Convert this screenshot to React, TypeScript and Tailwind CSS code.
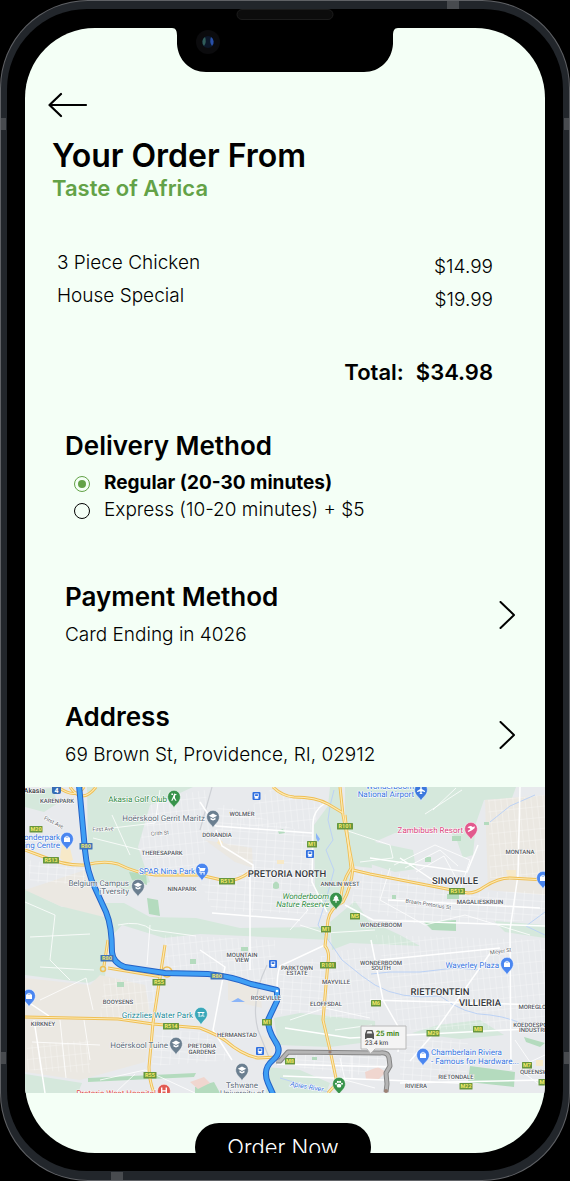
import { useState } from "react";
import type { ReactNode } from "react";

type Point = [number, number];

const items = [
  { name: "3 Piece Chicken", price: "$14.99" },
  { name: "House Special", price: "$19.99" },
];

const deliveryOptions = [
  { id: "regular", label: "Regular (20-30 minutes)" },
  { id: "express", label: "Express (10-20 minutes) + $5" },
];

const yellowRoads = [
  "M25 850 L44 857 Q66 866 85 865 Q104 860 118 864 Q136 873 155 875 L200 875 L226 881 Q238 881 250 872",
  "M58 787 Q76 800 84 787 M70 787 Q82 805 96 787",
  "M273 787 Q282 796 294 797 Q316 797 328 804 L343 813",
  "M340 787 L343 815 L353 868 Q351 888 343 902 Q330 908 328 920 L325 946 Q330 952 328 962 L323 1020 L330 1050 L337 1083 L328 1093",
  "M345 815 L351 868 Q340 885 341 903",
  "M353 870 L370 874 L447 889 L468 893 Q476 893 484 887 Q498 878 510 878 L545 880",
  "M108 940 L104 966 M108 968 L162 977",
  "M25 1017 L118 1019 L153 1024 L200 1028 Q218 1035 226 1041 Q242 1055 258 1058 L277 1057",
  "M165 945 L160 977 L153 1023 L149 1067 Q149 1080 154 1093",
];

const whiteRoads = [
  "M325 803 Q313 811 313 823 L312 882 L327 912",
  "M325 945 L280 966 Q277 974 277 990",
  "M200 802 L216 826 L312 833",
  "M216 830 L222 846 L253 865 L253 875",
  "M434 1033 L491 952 M410 1061 L434 1033",
  "M371 940 L383 1000 L400 1030 L398 1052",
  "M277 1064 L390 1067 M283 1076 L460 1083 M400 1083 L545 1080",
  "M285 1028 L350 1038 L545 1028",
  "M520 787 L518 875 L510 930 L511 1070",
  "M478 845 L467 872 L370 858 M400 858 L440 885",
  "M388 900 L540 908 M345 905 L373 920 L545 926",
  "M25 1000 L49 1016 M34 1020 L45 1093",
  "M200 950 L225 967 L213 1030 L232 1060",
  "M370 1000 L545 1005 M380 960 L500 948",
  "M250 875 L250 970 M212 913 L300 920",
];

const minorRoads = [
  "M25 902 L55 915 L50 960 L70 980 M30 937 L90 934 M40 967 L94 970",
  "M95 830 L155 823 L160 790 M93 838 L153 853 M112 815 L130 855",
  "M118 925 Q140 920 152 930 L196 936 M150 925 L147 965",
  "M433 810 L456 788 M425 814 L462 790",
  "M345 830 L390 845 L393 858 L360 862",
  "M394 865 L435 845 L470 860 L460 890 M405 868 L440 850 L458 866 M416 872 L444 856 L456 878",
  "M390 868 L380 900 L425 925 L465 915 L530 935",
  "M40 1000 L86 978 L93 1010 M32 1042 L100 1045 M60 1020 L66 1078 M84 1020 L90 1060",
  "M100 1080 L145 1070 L195 1093 M115 1093 L135 1074",
  "M290 890 L308 910 L290 930 M300 925 L325 933 L375 930",
  "M290 1020 L325 1008 L370 1018 M335 1030 L372 1025",
  "M340 1058 L345 1080 L375 1088 M352 1056 L352 1078",
  "M515 1040 L530 1062 L545 1055 M520 1070 L540 1085",
];

const greens = [
  "M87 787 H193 L165 800 L150 805 L138 847 L150 882 L128 890 L95 882 L88 850 Z",
  "M25 790 L52 788 L58 803 L44 812 L25 807 Z",
  "M25 889 L62 907 L105 903 L124 903 L150 917 L196 918 L240 928 L330 927 L330 940 L200 934 L164 938 L122 925 L108 940 L105 976 L88 983 L25 975 Z",
  "M330 787 L340 787 L343 814 L351 870 L343 902 L327 912 L315 888 L314 825 L328 806 Z",
  "M345 787 H516 L512 798 L484 800 L476 823 L473 855 L463 858 L456 838 L449 831 L423 832 L395 833 L370 844 L372 868 L354 866 L345 820 Z",
  "M370 841 L413 850 L416 869 L395 872 L370 864 Z",
  "M330 922 L355 901 L368 920 L400 935 L420 946 L350 943 L332 950 Z",
  "M274 1018 L300 1013 L375 1021 L376 1041 L330 1047 L278 1045 Z",
  "M494 921 L545 925 V938 L505 932 Z",
  "M25 1074 L82 1083 L78 1093 H25 Z",
  "M266 1067 L300 1070 L330 1083 L326 1093 H266 Z",
  "M438 1025 L480 1020 L504 1035 L460 1039 L412 1033 Z",
];

const parks = [
  "M147 898 L158 900 L160 916 L149 914 Z",
  "M129 872 L146 874 L147 885 L132 880 Z",
  "M470 1066 L515 1072 L514 1087 L468 1082 Z",
  "M424 922 L456 920 L456 931 L432 930 Z",
  "M88 1078 L196 1073 L194 1077 L88 1082 Z",
  "M195 1087 L214 1082 L220 1093 H195 Z",
  "M117 982 h7 v5 h-7 Z M190 959 h6 v5 h-6 Z",
  "M273 884 q3 -5 6 0 v4 q-3 2 -6 0 Z",
  "M278 831 l5 -2 2 4 -6 1 Z",
  "M425 857 h6 v5 h-6 Z M392 895 h4 v4 h-4 Z",
  "M452 836 h9 v5 h-9 Z M484 822 h5 v3 h-5 Z",
  "M241 947 h7 v4 h-7 Z M312 1057 h5 v3 h-5 Z",
  "M524 1037 L545 1043 L540 1047 L526 1042 Z",
  "M447 894 h12 v5 h-12 Z",
];

const sands = [
  "M25 890 L85 870 L92 890 L108 918 L60 906 Z",
  "M25 978 L90 985 L100 975 L145 985 L152 1023 L145 1062 L80 1080 L25 1072 Z",
  "M485 800 L545 795 V895 L488 890 Z",
  "M205 840 L252 848 L253 868 L235 862 Z",
  "M228 980 L260 990 L262 1008 L228 1000 Z",
  "M262 1035 L276 1042 L268 1062 L255 1058 Z",
];

const rivers = [
  "M334 790 L330 806 L328 820 L333 840 L326 850 L334 870 L326 900 L318 925 L342 960 L362 976 L375 985 Q400 1000 440 996 Q465 1015 490 1015 Q515 1018 533 1030",
  "M371 974 L390 972 L420 972 L455 968 L480 970",
  "M490 822 L510 806 L535 795",
  "M545 912 L526 926 L545 935",
  "M280 1078 Q300 1084 328 1092",
];

const shields: { x: number; y: number; text: string; blue?: boolean }[] = [
  { x: 36, y: 829, text: "M20" },
  { x: 51, y: 860, text: "R513" },
  { x: 86, y: 846, text: "R80", blue: true },
  { x: 227, y: 881, text: "R513" },
  { x: 345, y: 826, text: "R101" },
  { x: 312, y: 844, text: "M1" },
  { x: 326, y: 929, text: "M1" },
  { x: 355, y: 916, text: "M5" },
  { x: 457, y: 891, text: "R513" },
  { x: 107, y: 958, text: "R80", blue: true },
  { x: 159, y: 982, text: "R55" },
  { x: 171, y: 1026, text: "R514" },
  { x: 150, y: 1075, text: "R55" },
  { x: 217, y: 976, text: "R80", blue: true },
  { x: 267, y: 1022, text: "M1" },
  { x: 328, y: 965, text: "R101" },
  { x: 290, y: 1061, text: "M8" },
  { x: 376, y: 1003, text: "M6" },
  { x: 433, y: 1033, text: "M29" },
  { x: 478, y: 1029, text: "M8" },
  { x: 527, y: 1065, text: "M7" },
  { x: 466, y: 1086, text: "M22" },
  { x: 545, y: 1082, text: "M10" },
];

const districts: [number, number, string][] = [
  [57, 803, "KARENPARK"],
  [162, 855, "THERESAPARK"],
  [182, 891, "NINAPARK"],
  [242, 816, "WOLMER"],
  [217, 837, "DORANDIA"],
  [340, 886, "ANNLIN WEST"],
  [520, 854, "MONTANA"],
  [480, 904, "MAGALIESKRUIN"],
  [381, 927, "WONDERBOOM"],
  [381, 965, "WONDERBOOM"],
  [381, 970, "SOUTH"],
  [242, 957, "MOUNTAIN"],
  [242, 962, "VIEW"],
  [297, 970, "PARKTOWN"],
  [297, 975, "ESTATE"],
  [336, 984, "MAYVILLE"],
  [266, 1000, "ROSEVILLE"],
  [326, 1006, "ELOFFSDAL"],
  [118, 1004, "BOOYSENS"],
  [43, 1026, "KIRKNEY"],
  [237, 1037, "HERMANSTAD"],
  [202, 1048, "PRETORIA"],
  [202, 1054, "GARDENS"],
  [536, 1009, "MOREGLOED"],
  [536, 1027, "KOEDOESPOORT"],
  [536, 1032, "INDUSTRIAL"],
  [456, 1079, "RIETONDALE"],
  [416, 1088, "RIVIERA"],
  [540, 1074, "QUEENSWOOD"],
];

const towns: [number, number, string][] = [
  [287, 877, "PRETORIA NORTH"],
  [455, 884, "SINOVILLE"],
  [440, 995, "RIETFONTEIN"],
  [480, 1006, "VILLIERIA"],
];

const streets: [number, number, number, string][] = [
  [53, 824, 27, "First Ave"],
  [103, 831, -3, "First Ave"],
  [160, 835, -5, "Crith St"],
  [428, 906, 9, "Braam Pretorius St"],
  [501, 953, -8, "Meyer St"],
];

const blocks = [
  "M150 800 L205 790 L212 826 L200 870 L150 872 L140 845 Z",
  "M218 803 L312 835 L312 880 L325 915 L212 910 L200 880 L232 876 L253 866 L216 835 Z",
  "M270 790 L322 803 L312 830 L230 825 Z",
  "M360 868 L410 875 L470 893 L545 890 V920 L420 925 L350 905 Z",
  "M376 935 L545 940 V1028 L400 1030 Z",
  "M278 1052 L388 1055 L388 1078 L300 1068 Z",
  "M104 978 L160 980 L152 1024 L100 1018 Z",
  "M156 1030 L205 1032 L232 1060 L152 1066 Z",
  "M165 935 L275 940 L275 985 L165 970 Z",
  "M280 970 L325 955 L322 1012 L277 1014 Z",
  "M488 800 L545 795 V880 L490 878 Z",
  "M400 1040 L468 1040 L466 1080 L400 1083 Z",
  "M332 952 L370 947 L380 1020 L325 1018 Z",
  "M28 860 L84 868 L86 885 L30 882 Z",
  "M27 1045 L90 1040 L90 1073 L27 1070 Z",
];

const driveRoute =
  "M79 785 L85 850 Q87 872 95 888 L106 912 Q112 926 112 952 Q113 963 125 967 L165 973 L208 974 Q230 976 251 984 L277 990 V1001 L268 1020 Q268 1030 275 1041 Q283 1052 273 1060 Q262 1069 268 1083 L273 1094";
const altRoute =
  "M276 1061 H280 L288 1052 L380 1053 Q388 1052 389 1058 L390 1066 L386 1073 L387 1084 L386 1092";

function Pin({ x, y, color, children }: { x: number; y: number; color: string; children: ReactNode }) {
  return (
    <g transform={`translate(${x} ${y})`}>
      <path d="M0 11 C-1.4 6.8 -6.4 5.4 -6.4 -.3 A6.4 6.4 0 0 1 6.4 -.3 C6.4 5.4 1.4 6.8 0 11Z" fill={color} stroke="#fff" strokeWidth=".5" />
      <g fill="#fff" stroke="none">{children}</g>
    </g>
  );
}

const bag = <path d="M-3 -1.5 H-1.8 A1.8 1.8 0 0 1 1.8 -1.5 H3 V3 H-3 Z M-1 -1.5 H1 A1 1 0 0 0 -1 -1.5 Z" fillRule="evenodd" />;
const cart = <path d="M-4 -3 H-2.4 L-2 -2 H3.6 L2.4 1.2 H-1.4 L-1.8 2 H3 V2.8 H-3 L-2.2 1 L-3 -2.2 H-4 Z M-1.6 3.2 h1.4 v1.2 h-1.4 Z M1.4 3.2 h1.4 v1.2 h-1.4 Z" />;
const school = <path d="M-4.2 -1.2 L0 -3.4 L4.2 -1.2 L0 1 Z M-2.5 .6 L0 1.9 L2.5 .6 V2.4 L0 3.6 L-2.5 2.4 Z" />;
const tree = <path d="M0 -4 L2.6 -.8 H1.6 L3.4 1.8 H.6 V3.8 H-.6 V1.8 H-3.4 L-1.6 -.8 H-2.6 Z" />;
const golf = <path d="M-2.6 -3.6 h1.6 v1.6 h-1.6 Z M.2 -3.4 L3 -2.4 L1 -1.4 V1 L2.6 3.8 H1.4 L-.4 1.2 L-1.6 3.8 H-2.8 L-1 -.2 Z" />;
const paw = (
  <>
    <ellipse cx="0" cy="1.7" rx="2.3" ry="1.9" />
    <circle cx="-3" cy="-.2" r="1" />
    <circle cx="3" cy="-.2" r="1" />
    <circle cx="-1.1" cy="-2.1" r="1.1" />
    <circle cx="1.1" cy="-2.1" r="1.1" />
  </>
);
const plane = <path d="M-.7 -4 H.7 V-1 L4 1 V2 L.7 1.2 V3 L1.8 4 H-1.8 L-.7 3 V1.2 L-4 2 V1 L-.7 -1 Z" />;
const resort = <path d="M-3.6 -1.4 Q-1 -4.2 2 -1.8 L3.4 -3 L3.8 -1 L1 1.2 L-2.6 3 L-3.4 2 L-.6 .2 L-1.2 -.8 Z" />;
const hospital = <path d="M-3 -3.6 H-1.6 V-.8 H1.6 V-3.6 H3 V3.6 H1.6 V.6 H-1.6 V3.6 H-3 Z" />;
const waterPark = <path d="M-3.4 -2 H3.4 V-1 H2.4 V.8 H1.4 V-1 H-1.4 V3 H-2.4 V-1 H-3.4 Z M-.6 1.8 Q1.4 .6 3.4 1.8 V2.8 Q1.4 1.8 -.6 2.8 Z" />;

function Station({ at: [x, y] }: { at: Point }) {
  return (
    <g transform={`translate(${x} ${y})`}>
      <rect x="-4" y="-4" width="8" height="8" rx="1" fill="#2f6fdf" />
      <path d="M-2.2 -2.6 H2.2 V1.6 H-2.2 Z M-1.4 -1.8 V0 H1.4 V-1.8 Z M-2.2 2.8 L-1.2 1.6 H1.2 L2.2 2.8 Z" fill="#fff" fillRule="evenodd" />
    </g>
  );
}

function DeliveryMap() {
  return (
    <svg
      viewBox="25 787 520 306"
      role="img"
      aria-label="Delivery route map"
      textRendering="geometricPrecision"
      className="block h-auto w-full bg-[#e8eaed] font-[Roboto,sans-serif]"
    >
      <defs>
        <pattern id="grid-a" width="9" height="7" patternUnits="userSpaceOnUse" patternTransform="rotate(4)">
          <path d="M0 0H9M0 0V7" stroke="#fff" strokeWidth=".8" fill="none" />
        </pattern>
        <pattern id="grid-b" width="6" height="11" patternUnits="userSpaceOnUse" patternTransform="rotate(-6)">
          <path d="M0 0H6M0 0V11" stroke="#fff" strokeWidth=".7" fill="none" />
        </pattern>
      </defs>

      <g fill="#d5e8dc">
        {greens.map((d) => <path key={d} d={d} />)}
      </g>
      <g fill="#ebe8e2">
        {sands.map((d) => <path key={d} d={d} />)}
      </g>
      {blocks.map((d, i) => (
        <path key={d} d={d} fill={i % 2 ? "url(#grid-a)" : "url(#grid-b)"} opacity=".75" />
      ))}
      <g fill="#b4dbbe">
        {parks.map((d) => <path key={d} d={d} />)}
      </g>
      <g fill="#f7e9c8">
        <path d="M62 845 L70 848 L73 860 L66 864 L60 858 Z M277 860 h7 v4 h-7 Z M219 839 l4 3 -2 4 -4 -3 Z M506 870 h10 v8 h-8 Z M536 1060 h7 v6 h-7 Z" />
      </g>
      <g fill="#f0d6cf">
        <path d="M365 1072 l13 -5 8 5 -8 8 -12 -1 Z M190 1082 l14 -5 6 6 -12 6 Z M371 1038 l10 3 -3 5 -9 -2 Z" />
      </g>
      <path d="M231 1002 l7 -4 7 4 Z M316 833 l4 6 -2 3 -2 -4 Z" fill="#8ab4f8" />
      <g fill="none" stroke="#bcd2f5" strokeWidth="1">
        {rivers.map((d) => <path key={d} d={d} />)}
      </g>
      <path d="M267 965 Q250 1000 258 1030 L270 1060 M212 787 L200 830" fill="none" stroke="#cdd0d5" strokeWidth="1.2" />
      <g fill="none" stroke="#fff" strokeWidth=".8">
        {minorRoads.map((d) => <path key={d} d={d} />)}
      </g>
      <g fill="none" stroke="#fff" strokeWidth="1.5">
        {whiteRoads.map((d) => <path key={d} d={d} />)}
      </g>
      <g fill="none" stroke="#efbf55" strokeWidth="3" strokeLinejoin="round">
        {yellowRoads.map((d) => <path key={d} d={d} />)}
        <circle cx="103" cy="969" r="2.5" strokeWidth="1.5" />
        <circle cx="167" cy="972" r="5" strokeWidth="1.5" />
      </g>
      <g fill="none" stroke="#fdeab4" strokeWidth="1.2" strokeLinejoin="round">
        {yellowRoads.map((d) => <path key={d} d={d} />)}
      </g>

      <g fill="none" strokeLinejoin="round">
        <path d={altRoute} stroke="#858585" strokeWidth="5" />
        <path d={altRoute} stroke="#b5b5b5" strokeWidth="3" />
        <path d={driveRoute} stroke="#2462c6" strokeWidth="6" />
        <path d={driveRoute} stroke="#3f9ff5" strokeWidth="4" />
      </g>
      <circle cx="277" cy="991" r="1.3" fill="#fff" />
      <circle cx="330" cy="1052" r="1.6" fill="#9c8174" />
      <circle cx="386" cy="1091" r="2" fill="#9c8174" />

      {shields.map(({ x, y, text, blue }) => {
        const w = text.length * 3 + 4;
        return (
          <g key={`${x}-${y}`}>
            <rect x={x - w / 2} y={y - 3} width={w} height="6.5" rx=".6" fill={blue ? "#3f74b8" : "#68963c"} />
            <text x={x} y={y + 2.2} textAnchor="middle" fontSize="5.5" fontWeight="700" fill="#f5ea6b">{text}</text>
          </g>
        );
      })}

      <g stroke="#fff" strokeWidth="1.2" strokeLinejoin="round" paintOrder="stroke">
        <g fontSize="6" fontWeight="500" fill="#50555c" textAnchor="middle">
          {districts.map(([x, y, text]) => <text key={`${x}-${y}`} x={x} y={y}>{text}</text>)}
        </g>
        <g fontSize="9.5" fontWeight="500" fill="#34383d" textAnchor="middle">
          {towns.map(([x, y, text]) => <text key={text} x={x} y={y}>{text}</text>)}
        </g>
        <g fontSize="5.5" fill="#63676c" textAnchor="middle">
          {streets.map(([x, y, angle, text]) => (
            <text key={`${x}-${y}`} x={x} y={y} transform={`rotate(${angle} ${x} ${y})`}>{text}</text>
          ))}
        </g>
        <g fontSize="8" fill="#3574e0">
          <text x="60" y="840" textAnchor="end">Wonderpark</text>
          <text x="60" y="848" textAnchor="end">Shopping Centre</text>
          <text x="195" y="874" textAnchor="end">SPAR Nina Park</text>
          <text x="414" y="789" textAnchor="end">Wonderboom</text>
          <text x="414" y="797" textAnchor="end">National Airport</text>
          <text x="499" y="968" textAnchor="end">Waverley Plaza</text>
          <text x="431" y="1055">Chamberlain Riviera</text>
          <text x="431" y="1064">- Famous for Hardware...</text>
          <text x="290" y="1086" fontSize="7" fontStyle="italic" transform="rotate(10 290 1086)">Apies River</text>
        </g>
        <g fontSize="8" fill="#5b6b78">
          <text x="205" y="821" textAnchor="end">Hoërskool Gerrit Maritz</text>
          <text x="129" y="886" textAnchor="end">Belgium Campus</text>
          <text x="129" y="894" textAnchor="end">iTversity</text>
          <text x="168" y="1048" textAnchor="end">Hoërskool Tuine</text>
          <text x="242" y="1088" textAnchor="middle">Tshwane</text>
          <text x="242" y="1096" textAnchor="middle">University of</text>
        </g>
        <g fontSize="8" fill="#2f8a45">
          <text x="167" y="802" textAnchor="end">Akasia Golf Club</text>
          <text x="329" y="899" textAnchor="end" fontStyle="italic">Wonderboom</text>
          <text x="329" y="907" textAnchor="end" fontStyle="italic">Nature Reserve</text>
        </g>
        <text x="193" y="1018" textAnchor="end" fontSize="8" fill="#218a98">Grizzlies Water Park</text>
        <text x="463" y="833" textAnchor="end" fontSize="8" fill="#d8447d">Zambibush Resort</text>
        <text x="156" y="1096" textAnchor="end" fontSize="8" fill="#d9473f">Pretoria West Hospital</text>
        <text x="45" y="793" textAnchor="end" fontSize="7" fontWeight="500" fill="#34383d">Akasia</text>
      </g>

      <rect x="52" y="785" width="9" height="9" rx="2" fill="#376cb4" />
      <text x="56.5" y="793" textAnchor="middle" fontSize="7" fontWeight="700" fill="#fff">4</text>

      <Pin x={174} y={797} color="#38934b">{golf}</Pin>
      <Pin x={213} y={817} color="#6b7f90">{school}</Pin>
      <Pin x={67} y={839} color="#4a86f0">{bag}</Pin>
      <Pin x={202} y={870} color="#4a86f0">{cart}</Pin>
      <Pin x={138} y={886} color="#6b7f90">{school}</Pin>
      <Pin x={336} y={899} color="#38934b">{tree}</Pin>
      <Pin x={421} y={790} color="#3c78dd">{plane}</Pin>
      <Pin x={471} y={829} color="#e2598d">{resort}</Pin>
      <Pin x={543} y={878} color="#4a86f0">{bag}</Pin>
      <Pin x={29} y={996} color="#4a86f0">{bag}</Pin>
      <Pin x={201} y={1014} color="#3aa7b9">{waterPark}</Pin>
      <Pin x={176} y={1044} color="#6b7f90">{school}</Pin>
      <Pin x={242} y={1070} color="#6b7f90">{school}</Pin>
      <Pin x={164} y={1091} color="#e15a52">{hospital}</Pin>
      <Pin x={339} y={1084} color="#38934b">{paw}</Pin>
      <Pin x={507} y={964} color="#4a86f0">{bag}</Pin>
      <Pin x={423} y={1055} color="#4a86f0">{bag}</Pin>

      <Station at={[256.5, 796]} />
      <Station at={[310, 854]} />
      <Station at={[273, 964]} />
      <Station at={[260, 1051]} />

      <path d="M361 1026 H406 V1049 H375 L370.5 1053.5 L367 1049 H361 Z" fill="#f4f4f4" stroke="#b8b8b8" />
      <path d="M365 1034 L366.5 1030 H372.500 L374 1034 V1039 H372.500 V1038 H366.500 V1039 H365 Z M366.700 1033.500 H372.300 L371.500 1031.300 H367.500 Z" fill="#555" fillRule="evenodd" />
      <text x="376" y="1036" fontSize="7.5" fontWeight="700" fill="#4a8c22">25 min</text>
      <text x="365" y="1045" fontSize="6.5" fill="#333">23.4 km</text>
    </svg>
  );
}

function Chevron() {
  return (
    <svg viewBox="0 0 16 28" className="h-7 w-4 shrink-0" fill="none" stroke="#000" strokeWidth="2" strokeLinecap="round" strokeLinejoin="round" aria-hidden="true">
      <path d="M1.5 1 L15 14 L1.5 27" />
    </svg>
  );
}

function DetailRow({ title, value }: { title: string; value: string }) {
  return (
    <button type="button" className="flex w-full items-center justify-between pr-[30px] pl-10 text-left">
      <span className="block">
        <span className="block text-[26px] leading-8 font-semibold">{title}</span>
        <span className="mt-2 block text-[19px] leading-7 font-light">{value}</span>
      </span>
      <Chevron />
    </button>
  );
}

export default function App() {
  const [delivery, setDelivery] = useState("regular");

  return (
    <main className="bg-black font-[Inter,sans-serif] text-black">
      <div className="relative rounded-[88px] bg-[#606266] p-px">
        <div className="relative rounded-[87px] bg-[#22262b] px-[6px] pt-2 pb-[9px]">
          <span className="absolute top-[117px] left-0 h-3 w-[5px] bg-[#484b4f]" />
          <span className="absolute top-[117px] right-0 h-3 w-[5px] bg-[#484b4f]" />
          <span className="absolute bottom-[116px] left-0 h-3 w-[5px] bg-[#484b4f]" />
          <span className="absolute right-0 bottom-[116px] h-3 w-[5px] bg-[#484b4f]" />
          <span className="absolute top-0 right-[110px] h-2 w-3 bg-[#484b4f]" />
          <span className="absolute bottom-0 left-[110px] h-2 w-3 bg-[#484b4f]" />

          <div className="relative rounded-[80px] bg-black px-[18px] pt-[19px] pb-[18px]">
            <span className="absolute top-0 left-1/2 h-[11px] w-[97px] -translate-x-1/2 rounded-md border border-[#1c1c1c] bg-[#0c0c0c]" />

            <div className="relative overflow-hidden rounded-[70px] bg-[#f4fff6]">
              <svg viewBox="0 0 226 45" className="absolute top-0 left-1/2 h-[45px] w-[226px] -translate-x-1/2" aria-hidden="true">
                <path d="M0 0 C4 0 5 3 5 8 V16 C6 32 18 44 34 44 H192 C208 44 220 32 221 16 V8 C221 3 222 0 226 0 Z" fill="#000" />
                <circle cx="36" cy="14" r="12" fill="#0b0b0d" />
                <circle cx="36" cy="14" r="6" fill="#0c1729" />
                <path d="M33 9 A6 6 0 0 0 32 18 Q35 14 33 9Z" fill="#315d59" />
                <path d="M39 9 A6 6 0 0 1 40 18 Q37 14 39 9Z" fill="#2950a8" />
              </svg>

              <header className="px-[27px] pt-[64px]">
                <button type="button" aria-label="Back" className="-ml-1 block">
                  <svg viewBox="0 0 40 26" className="h-[26px] w-10" fill="none" stroke="#000" strokeWidth="2.2" strokeLinecap="round" strokeLinejoin="round" aria-hidden="true">
                    <path d="M13 2 L1.500 13 L13 24 M1.500 13 H38" />
                  </svg>
                </button>
                <h1 className="mt-5 text-[32px] leading-9 font-semibold">Your Order From</h1>
                <p className="text-[22px] leading-7 font-semibold text-[#63a247]">Taste of Africa</p>
              </header>

              <section aria-label="Order summary" className="mt-11 pr-[52px] pl-8">
                <dl className="text-[19px] font-light">
                  {items.map((item) => (
                    <div key={item.name} className="flex h-[33px] justify-between">
                      <dt className="leading-[33px]">{item.name}</dt>
                      <dd className="leading-[41px]">{item.price}</dd>
                    </div>
                  ))}
                </dl>
                <p className="mt-11 flex justify-end gap-3 text-[22px] leading-8 font-semibold">
                  <span>Total:</span>
                  <span>$34.98</span>
                </p>
              </section>

              <fieldset className="mt-[42px] px-10">
                <legend className="text-[26px] leading-8 font-semibold">Delivery Method</legend>
                <div className="pt-2 pl-[9px]">
                  {deliveryOptions.map((option) => (
                    <label
                      key={option.id}
                      htmlFor={option.id}
                      className="flex h-[27px] items-center gap-[14px] text-[19px] font-light has-checked:font-bold"
                    >
                      <input
                        id={option.id}
                        type="radio"
                        name="delivery"
                        checked={delivery === option.id}
                        onChange={() => setDelivery(option.id)}
                        className="size-4 shrink-0 appearance-none rounded-full border border-black bg-clip-content p-[3px] checked:border-[#63a247] checked:bg-[#63a247]"
                      />
                      {option.label}
                    </label>
                  ))}
                </div>
              </fieldset>

              <div className="mt-[57px] flex flex-col gap-[52px]">
                <DetailRow title="Payment Method" value="Card Ending in 4026" />
                <DetailRow title="Address" value="69 Brown St, Providence, RI, 02912" />
              </div>

              <div className="mt-[18px]">
                <DeliveryMap />
              </div>

              <div className="mt-[30px] flex h-[30px] items-start justify-center overflow-hidden pr-1">
                <button type="button" className="h-12 w-44 shrink-0 rounded-3xl bg-black text-[22px] font-light text-white">
                  Order Now
                </button>
              </div>
            </div>
          </div>
        </div>
      </div>
    </main>
  );
}
